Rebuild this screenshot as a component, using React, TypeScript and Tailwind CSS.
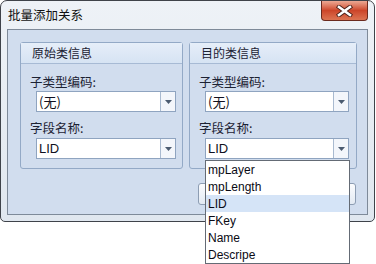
import React from 'react';

const cjk = "font-['Noto_Sans_CJK_SC','Microsoft_YaHei',sans-serif]";
const latin = "font-['Liberation_Sans','Noto_Sans_CJK_SC',sans-serif]";

function Arrow() {
  return (
    <svg width="7" height="4" viewBox="0 0 7 4">
      <path d="M0 0H7L3.5 4Z" fill="#4b5b70" />
    </svg>
  );
}

function Combo({value, width}: {value: string; width: string}) {
  return (
    <div className={`flex h-[21px] ${width} border border-[#8fa4c0] bg-white`}>
      <div className={`flex flex-1 items-center pl-[2px] text-[13px] leading-none text-[#101020] ${value === 'LID' ? latin : cjk}`}>{value}</div>
      <div className="flex w-[15px] items-center justify-center border-l border-[#a9bad0] bg-[#f3f6fb]">
        <Arrow />
      </div>
    </div>
  );
}

function GroupBox({title, width, comboWidth}: {title: string; width: string; comboWidth: string}) {
  return (
    <div className={`flex h-[127px] ${width} flex-col rounded-[3px] border border-[#93a9c6] bg-[#d1ddee]`}>
      <div className={`flex h-[21px] items-center border-b border-[#a7bad4] bg-gradient-to-b from-[#e6eef9] to-[#d6e3f3] pl-[11px] text-[12px] text-[#1c2233] ${cjk}`}>
        {title}
      </div>
      <div className={`mt-[10px] h-[16px] pl-[9px] text-[12.5px] leading-[16px] text-[#1c2233] ${cjk}`}>子类型编码:</div>
      <div className="mt-[1px] pl-[15px]">
        <Combo value="(无)" width={comboWidth} />
      </div>
      <div className={`mt-[8px] h-[16px] pl-[9px] text-[12.5px] leading-[16px] text-[#1c2233] ${cjk}`}>字段名称:</div>
      <div className="mt-[2px] pl-[15px]">
        <Combo value="LID" width={comboWidth} />
      </div>
    </div>
  );
}

function CloseButton() {
  return (
    <div className="absolute right-[6px] top-0 flex h-[20px] w-[47px] items-center justify-center rounded-b-[4px] border border-t-0 border-[#6b2a1e] bg-gradient-to-b from-[#eba893] via-[#cc4529] to-[#dc7352]">
      <svg width="17" height="12" viewBox="0 0 17 12">
        <path d="M3 2L14 10M14 2L3 10" stroke="#4a2018" strokeWidth="4.4" strokeLinecap="square" />
        <path d="M3 2L14 10M14 2L3 10" stroke="#ffffff" strokeWidth="2.6" strokeLinecap="square" />
      </svg>
    </div>
  );
}

const fields = ['mpLayer', 'mpLength', 'LID', 'FKey', 'Name', 'Descripe'];

export default function App() {
  return (
    <div className="relative h-[264px] w-[376px] overflow-hidden bg-white">
      <div className="relative flex h-[222px] w-[375px] flex-col rounded-t-[7px] rounded-b-[5px] border border-[#3f434a] bg-gradient-to-b from-[#eef2f7] to-[#e0e7ef]">
        <div className={`flex h-[28px] items-center pl-[7px] text-[12.5px] text-[#111] ${cjk}`}>批量添加关系</div>
        <CloseButton />
        <div className="mx-[6px] flex h-[186px] flex-col border border-[#7e8a99] bg-[#d1ddee] pl-[12px] pt-[12px]">
          <div className="flex gap-[6px]">
            <GroupBox title="原始类信息" width="w-[163px]" comboWidth="w-[140px]" />
            <GroupBox title="目的类信息" width="w-[168px]" comboWidth="w-[144px]" />
          </div>
          <div className="mt-[14px] flex gap-[8px] pl-[178px]">
            <div className="h-[22px] w-[75px] rounded-[3px] border border-[#8d9db3] bg-gradient-to-b from-[#fbfcfe] to-[#e3eaf3]" />
            <div className="h-[22px] w-[75px] rounded-[3px] border border-[#8d9db3] bg-gradient-to-b from-[#fbfcfe] to-[#e3eaf3]" />
          </div>
        </div>
      </div>
      <div className={`absolute left-[205px] top-[160px] w-[145px] border border-[#646b75] bg-white ${latin}`}>
        {fields.map((f) => (
          <div
            key={f}
            className={`flex h-[17px] items-center pl-[2px] text-[12px] text-[#0a0a14] ${f === 'LID' ? 'bg-[#d5e4f7]' : ''}`}
          >
            {f}
          </div>
        ))}
      </div>
    </div>
  );
}
